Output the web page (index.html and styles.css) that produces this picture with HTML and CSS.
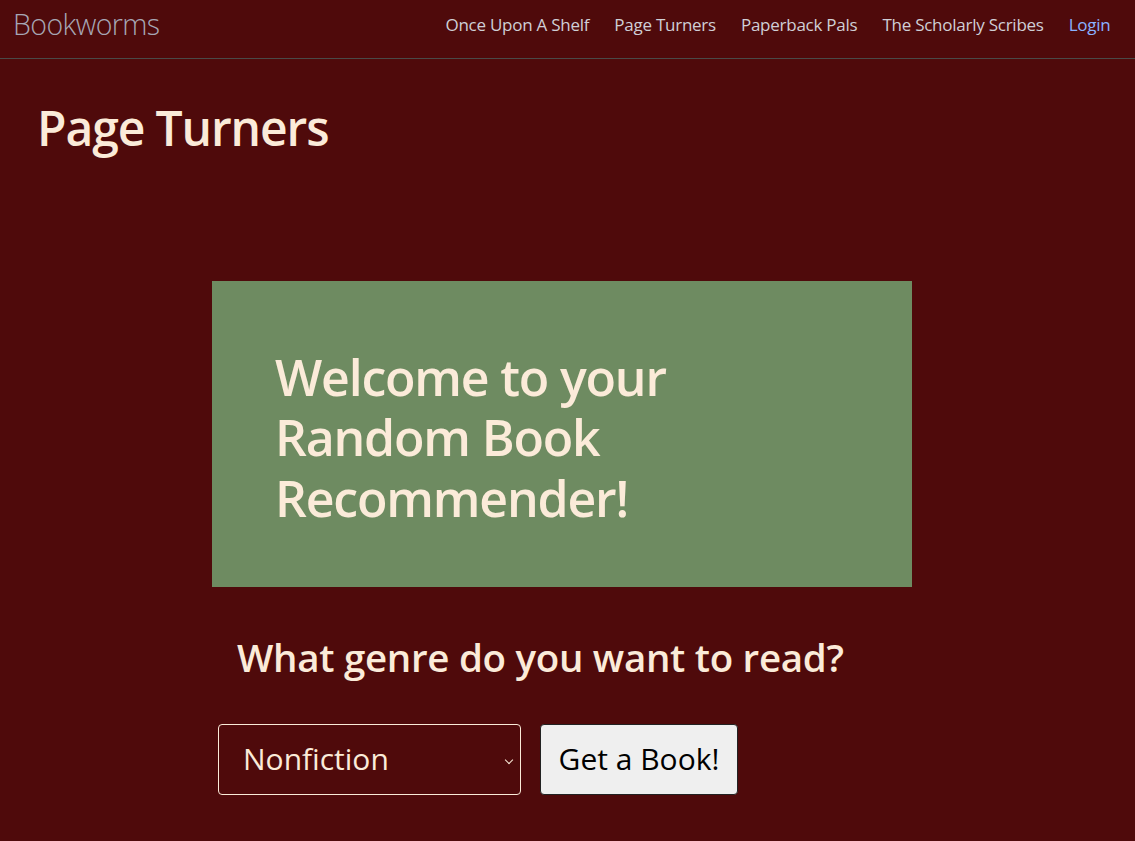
FILE: index.html
```html
<!DOCTYPE html>
<html lang="en">
<head>
<meta charset="utf-8">
<title>Page Turners</title>
<link rel="stylesheet" href="styles.css">
</head>
<body>
<nav class="navbar">
  <a class="brand" href="#">Bookworms</a>
  <ul class="nav-links">
    <li><a href="#">Once Upon A Shelf</a></li>
    <li><a href="#">Page Turners</a></li>
    <li><a href="#">Paperback Pals</a></li>
    <li><a href="#">The Scholarly Scribes</a></li>
    <li><a class="login" href="#">Login</a></li>
  </ul>
</nav>
<main class="page">
  <h1 class="page-title">Page Turners</h1>
  <section class="recommender">
    <div class="welcome">
      <h2>Welcome to your<br>Random Book<br>Recommender!</h2>
    </div>
    <h3 class="question">What genre do you want to read?</h3>
    <form class="picker">
      <div class="select-wrap">
        <select class="genre">
          <option>Nonfiction</option>
          <option>Fiction</option>
          <option>Mystery</option>
        </select>
      </div>
      <button type="button" class="get-book">Get a Book!</button>
    </form>
  </section>
</main>
</body>
</html>
```
FILE: styles.css
```css
* { box-sizing: border-box; }
html, body {
  margin: 0;
  background: #4f0a0b;
  font-family: "Open Sans", "Noto Sans", sans-serif;
  color: #fbebd9;
  height: 100%;
}
.navbar {
  display: flex;
  align-items: center;
  justify-content: space-between;
  height: 59px;
  padding: 0 12px 10px 13px;
  border-bottom: 1px solid #4a4a48;
}
.brand {
  font-size: 28.5px;
  font-weight: 300;
  color: #a6a6b4;
  text-decoration: none;
  letter-spacing: -0.6px;
}
.nav-links {
  display: flex;
  list-style: none;
  margin: 0;
  padding: 0;
}
.nav-links a {
  display: block;
  padding: 8px 12.5px;
  font-size: 17px;
  color: #cfcfd6;
  text-decoration: none;
  letter-spacing: -0.25px;
}
.nav-links a.login { color: #8ab2ff; }
.page {
  padding: 0 37px;
}
.page-title {
  margin: 0;
  padding-top: 40px;
  font-size: 48px;
  font-weight: 600;
  letter-spacing: -1.1px;
  line-height: 1.2;
}
.recommender {
  width: 700px;
  margin: 124px 0 0 175px;
}
.welcome {
  background: #6e8b61;
  height: 306px;
  padding: 66px 63px 0;
}
.welcome h2 {
  margin: 0;
  font-size: 50px;
  font-weight: 600;
  line-height: 60.5px;
  letter-spacing: -1.2px;
}
.question {
  margin: 44px 0 0 25px;
  font-size: 38.5px;
  font-weight: 600;
  line-height: 52px;
  letter-spacing: -0.3px;
}
.picker {
  display: flex;
  gap: 19px;
  margin: 41px 0 0 6px;
}
.select-wrap {
  position: relative;
  width: 303px;
  height: 71px;
}
.genre {
  width: 100%;
  height: 100%;
  appearance: none;
  background: transparent;
  border: 1px solid #fbebd9;
  border-radius: 4px;
  color: #fbebd9;
  font-family: inherit;
  font-size: 30px;
  padding: 0 0 2px 24px;
}
.select-wrap::after {
  content: "";
  position: absolute;
  right: 9px;
  top: 33px;
  width: 5px;
  height: 5px;
  border-right: 1.5px solid #fbebd9;
  border-bottom: 1.5px solid #fbebd9;
  transform: rotate(45deg);
  pointer-events: none;
}
.genre option { color: #000; background: #fff; }
.get-book {
  width: 198px;
  height: 71px;
  background: #efefef;
  border: 1px solid #222;
  border-radius: 4px;
  color: #000;
  font-family: inherit;
  font-size: 30px;
  padding: 0 0 2px 0;
}
```
